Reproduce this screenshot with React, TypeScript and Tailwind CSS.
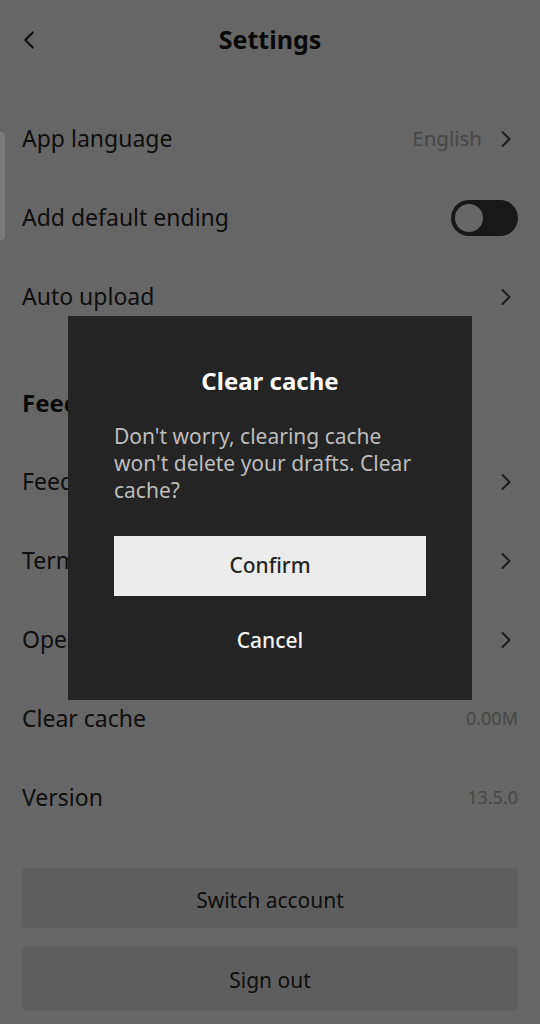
import { ChevronLeft, ChevronRight } from "lucide-react";

interface RowProps {
  label: string;
  value?: string;
  chevron?: boolean;
  toggle?: boolean;
}

const Row = ({ label, value, chevron, toggle }: RowProps) => (
  <div className="flex h-[79px] items-center justify-between px-[22px]">
    <span className="text-[23px] text-[#262626]">{label}</span>
    <div className="flex items-center gap-[10px]">
      {value ? (
        <span
          className={
            chevron
              ? "text-[20.5px] text-[#b4b4b4]"
              : "text-[18px] text-[#b4b4b4]"
          }
        >
          {value}
        </span>
      ) : null}
      {chevron ? (
        <ChevronRight
          className="h-[28px] w-[28px] -mr-[2px] text-[#474747]"
          strokeWidth={1.7}
        />
      ) : null}
      {toggle ? (
        <div className="flex h-[36px] w-[67px] items-center rounded-full bg-[#3c3c3f] px-[2px]">
          <div className="h-[32px] w-[32px] rounded-full border-2 border-[#3c3c3f] bg-white" />
        </div>
      ) : null}
    </div>
  </div>
);

const ClearCacheDialog = () => (
  <div className="absolute inset-0 flex items-start justify-center pt-[316px]">
    <div className="flex h-[384px] w-[404px] flex-col bg-[#242424] px-[46px] pt-[48px]">
      <h2 className="text-center text-[24px] font-bold leading-[34px] text-white">
        Clear cache
      </h2>
      <p className="mt-[25px] text-[21px] leading-[27px] text-[#bdbdbd]">
        Don't worry, clearing cache won't delete your drafts. Clear cache?
      </p>
      <button className="mt-[32px] h-[60px] w-full bg-[#ececec] text-[21px] font-medium text-[#262626]">
        Confirm
      </button>
      <button className="mt-[15px] h-[60px] w-full text-[21px] font-medium text-[#f2f2f2]">
        Cancel
      </button>
    </div>
  </div>
);

export default function App() {
  return (
    <div
      className="relative h-[1024px] w-[540px] overflow-hidden bg-white"
      style={{ fontFamily: "'Noto Sans', 'Open Sans', sans-serif" }}
    >
      <header className="relative flex h-[80px] items-center justify-center">
        <ChevronLeft
          className="absolute left-[14px] h-[30px] w-[30px] text-[#262626]"
          strokeWidth={1.7}
        />
        <h1 className="text-[25px] font-bold text-[#161616]">Settings</h1>
      </header>

      <div className="pt-[19px]">
        <Row label="App language" value="English" chevron />
        <Row label="Add default ending" toggle />
        <Row label="Auto upload" chevron />
      </div>

      <div className="pt-[27px]">
        <div className="flex h-[79px] items-center px-[22px]">
          <span className="text-[24px] font-bold text-[#161616]">
            Feedback and help
          </span>
        </div>
        <Row label="Feedback" chevron />
        <Row label="Terms of Service" chevron />
        <Row label="Open source licenses" chevron />
        <Row label="Clear cache" value="0.00M" />
        <Row label="Version" value="13.5.0" />
      </div>

      <div className="mt-[31px] flex flex-col gap-[19px] px-[22px]">
        <button className="h-[60px] rounded-[4px] bg-[#ececec] pt-[5px] text-[21px] text-[#262626]">
          Switch account
        </button>
        <button className="h-[64px] rounded-[4px] bg-[#ececec] pt-[4px] text-[21px] text-[#262626]">
          Sign out
        </button>
      </div>

      {/* dim overlay */}
      <div className="absolute inset-0 bg-black/60" />

      {/* edge handle */}
      <div className="absolute left-0 top-[132px] h-[108px] w-[5px] rounded-r-[4px] bg-[#7a7a7a]" />

      <ClearCacheDialog />
    </div>
  );
}
